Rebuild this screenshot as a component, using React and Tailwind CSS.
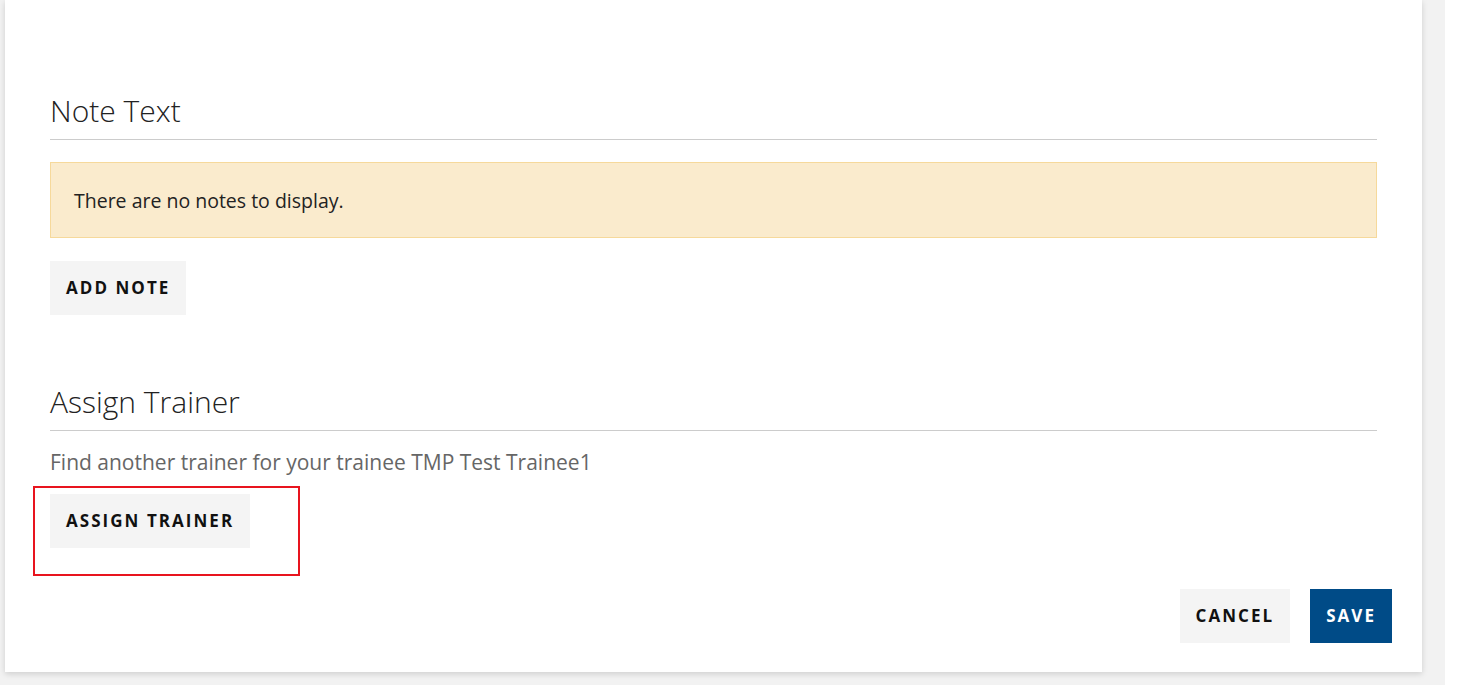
const font = { fontFamily: '"Open Sans", "Noto Sans", sans-serif' }

function Heading({ children }) {
  return (
    <h2 className="border-b border-[#cccccc] pb-[10px] text-[30px] font-light leading-[36px] text-[#222222]">
      {children}
    </h2>
  )
}

function Button({ children, primary = false }) {
  return (
    <button
      type="button"
      className={
        primary
          ? 'bg-[#004b87] px-4 py-4 text-[17px] font-bold uppercase leading-[22px] tracking-[0.12em] text-white'
          : 'bg-[#f4f4f4] px-4 py-4 text-[17px] font-bold uppercase leading-[22px] tracking-[0.12em] text-[#111111]'
      }
    >
      {children}
    </button>
  )
}

export default function App() {
  return (
    <div className="flex h-[685px] w-[1460px] overflow-hidden bg-[#f2f2f2]" style={font}>
      <div className="ml-[5px] flex h-[672px] w-[1417px] flex-col bg-white shadow-[0_2px_6px_rgba(0,0,0,0.15)]">
        <div className="px-[45px] pt-[93px]">
          <Heading>Note Text</Heading>
          <div className="mt-[22px] border border-[#f6d99b] bg-[#faebcd] px-[23px] pb-[23px] pt-[25px] text-[19.5px] leading-[26px] text-[#222222]">
            There are no notes to display.
          </div>
          <div className="mt-[23px]">
            <Button>Add note</Button>
          </div>

          <div className="mt-[69px]">
            <Heading>Assign Trainer</Heading>
          </div>
          <p className="mt-[17px] text-[21px] leading-[28px] text-[#666666]">
            Find another trainer for your trainee TMP Test Trainee1
          </p>
          <div className="relative mt-[18px] inline-block">
            <Button>Assign trainer</Button>
            <span className="pointer-events-none absolute left-[-17px] top-[-8px] h-[90px] w-[267px] border-2 border-[#e8141e]" />
          </div>
        </div>
        <div className="mt-[41px] flex justify-end gap-5 pr-[30px]">
          <Button>Cancel</Button>
          <Button primary>Save</Button>
        </div>
      </div>
      <div className="ml-auto h-full w-[15px] bg-white" />
    </div>
  )
}
